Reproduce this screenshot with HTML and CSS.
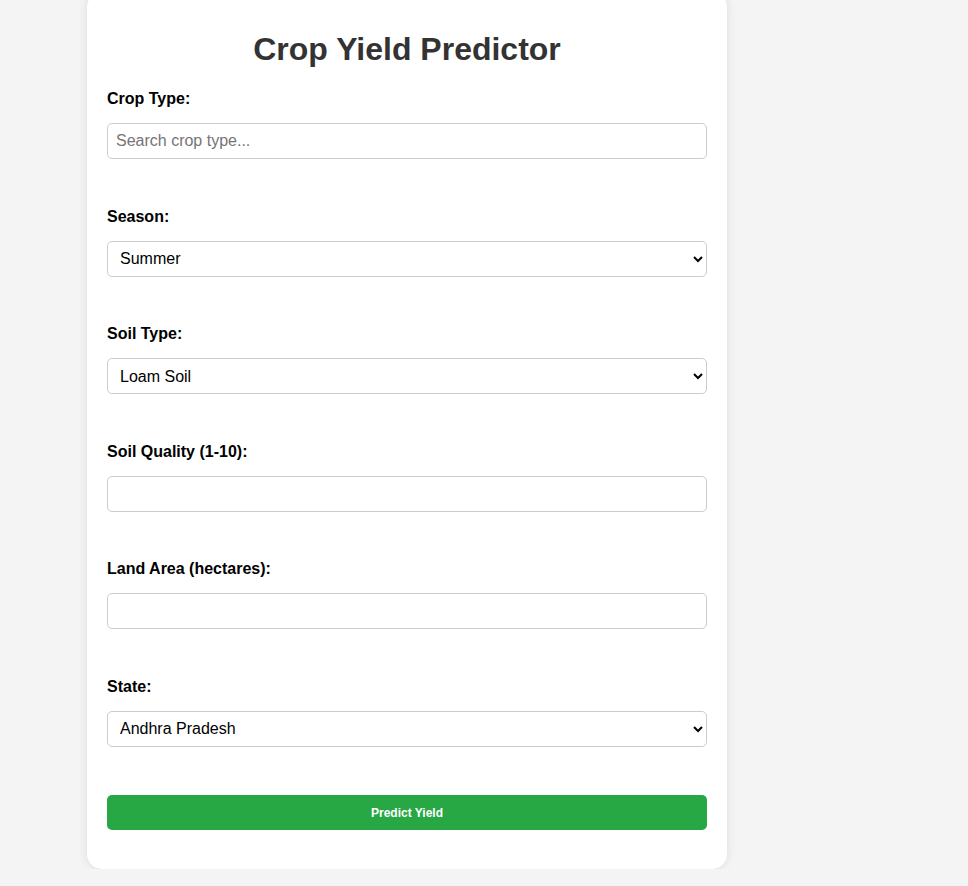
FILE: index.html
```html
<!DOCTYPE html>
<html lang="en">
<head>
<meta charset="UTF-8">
<title>Crop Yield Predictor</title>
<link rel="stylesheet" href="styles.css">
</head>
<body>
<div class="card">
  <h2 class="title">Crop Yield Predictor</h2>
  <form class="form">
    <label class="label" for="crop">Crop Type:</label>
    <input class="field" id="crop" type="text" placeholder="Search crop type...">

    <label class="label" for="season">Season:</label>
    <select class="field select" id="season">
      <option>Summer</option>
      <option>Winter</option>
      <option>Rainy</option>
    </select>

    <label class="label" for="soil">Soil Type:</label>
    <select class="field select" id="soil">
      <option>Loam Soil</option>
      <option>Clay Soil</option>
      <option>Sandy Soil</option>
    </select>

    <label class="label" for="quality">Soil Quality (1-10):</label>
    <input class="field" id="quality" type="number">

    <label class="label" for="area">Land Area (hectares):</label>
    <input class="field" id="area" type="number">

    <label class="label" for="state">State:</label>
    <select class="field select" id="state">
      <option>Andhra Pradesh</option>
      <option>Karnataka</option>
      <option>Tamil Nadu</option>
    </select>

    <button class="submit" type="button">Predict Yield</button>
  </form>
</div>
</body>
</html>
```

FILE: styles.css
```css
html, body {
  margin: 0;
  padding: 0;
}

body {
  background: #f4f4f4;
  font-family: "Liberation Sans", Arial, sans-serif;
  overflow: hidden;
}

.card {
  box-sizing: border-box;
  width: 640px;
  margin: -8px 0 0 87px;
  padding: 20px 20px 39px;
  background: #ffffff;
  border-radius: 15px;
  box-shadow: 0 0 10px rgba(0, 0, 0, 0.1);
}

.title {
  margin: 19px 0 22px;
  text-align: center;
  font-size: 32px;
  font-weight: bold;
  color: #333333;
  line-height: normal;
}

.form {
  display: flex;
  flex-direction: column;
}

.label {
  display: block;
  font-size: 16px;
  font-weight: bold;
  color: #000000;
  margin-bottom: 15px;
  line-height: 18px;
}

.field {
  box-sizing: border-box;
  width: 600px;
  height: 36px;
  margin: 0 0 48.5px;
  padding: 8px;
  border: 1px solid #cccccc;
  border-radius: 5px;
  font-family: "Liberation Sans", Arial, sans-serif;
  font-size: 16px;
  color: #000000;
  background: #ffffff;
}

.field::placeholder {
  color: #757575;
}

.select {
  padding: 6px 8px;
}

.submit {
  width: 600px;
  height: 35px;
  margin: 0;
  border: none;
  border-radius: 5px;
  background: #28a745;
  color: #ffffff;
  font-family: "Liberation Sans", Arial, sans-serif;
  font-size: 12px;
  font-weight: bold;
  cursor: pointer;
}
```
